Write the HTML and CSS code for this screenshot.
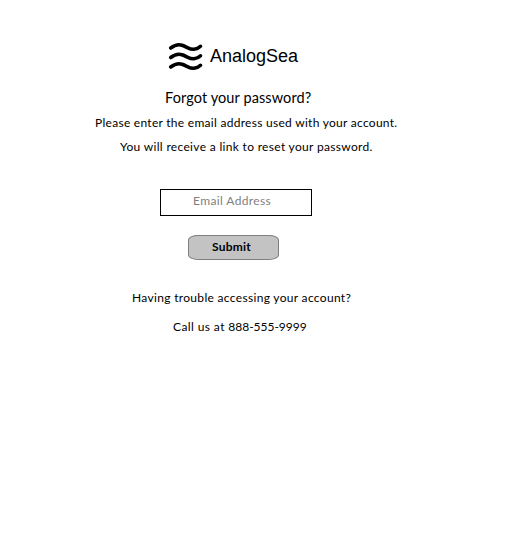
FILE: index.html
```html
<!DOCTYPE html>
<html lang="en">
<head>
<meta charset="utf-8">
<title>AnalogSea</title>
<link rel="stylesheet" href="styles.css">
</head>
<body>
<main class="page">
  <header class="brand">
    <svg class="waves" width="36" height="30" viewBox="0 0 36 30" aria-hidden="true">
      <path d="M2.700 7C6 4.500 9 2.500 14 4.200S22 8.700 26 8.300Q30 7.800 32.500 5.300M2.700 16.500C6 14 9 12 14 13.700S22 18.200 26 17.800Q30 17.300 32.500 14.800M2.700 26C6 23.500 9 21.500 14 23.200S22 27.700 26 27.300Q30 26.800 32.500 24.300"/>
    </svg>
    <span class="name">AnalogSea</span>
  </header>
  <h1 class="title">Forgot your password?</h1>
  <p class="line hint">Please enter the email address used with your account.</p>
  <p class="line hint-more">You will receive a link to reset your password.</p>
  <form class="form">
    <input class="email" type="text" placeholder="Email Address">
    <button class="submit" type="button">Submit</button>
  </form>
  <p class="line trouble">Having trouble accessing your account?</p>
  <p class="line call">Call us at <span class="phone">888-555-9999</span></p>
</main>
</body>
</html>
```
FILE: styles.css
```css
* { box-sizing: border-box; }
body { margin: 0; background: #fff; color: #000; font-family: Lato, sans-serif; }
.page { display: flex; flex-direction: column; align-items: flex-start; padding-top: 41px; }
.brand { display: flex; align-items: center; height: 30px; margin-left: 168px; }
.waves { flex: none; fill: none; stroke: #000; stroke-width: 3.6; stroke-linecap: round; }
.name { margin-left: 6px; font: 18px/30px "Liberation Sans", sans-serif; white-space: nowrap; }
.title { margin: 16px 0 0 165px; font-size: 14.500px; font-weight: 400; line-height: 22px; letter-spacing: 0.1px; white-space: nowrap; }
.line { margin: 0; font-size: 12px; line-height: 24px; letter-spacing: 0.32px; white-space: nowrap; }
.hint { margin-left: 95px; margin-top: 2px; letter-spacing: 0.28px; }
.hint-more { margin-left: 120px; }
.form { display: flex; flex-direction: column; align-items: flex-start; margin-top: 30px; }
.email { width: 152px; height: 27px; margin-left: 160px; padding: 0 8px 4px 32px; border: 1px solid #000; border-radius: 0; background: #fff; font: 12px Lato, sans-serif; letter-spacing: 0.38px; }
.email::placeholder { color: #7f7f7f; opacity: 1; }
.submit { width: 91px; height: 25px; margin: 19px 0 0 188px; padding: 0 0 2px 23px; border: 1px solid #7f7f7f; border-radius: 10px / 5px; background: #c3c3c3; color: #000; font: 700 12px Lato, sans-serif; letter-spacing: 0.2px; text-align: left; }
.trouble { margin: 26px 0 0 132px; }
.call { margin: 5px 0 0 173px; letter-spacing: 0.4px; }
.phone { letter-spacing: -0.02px; }
```
